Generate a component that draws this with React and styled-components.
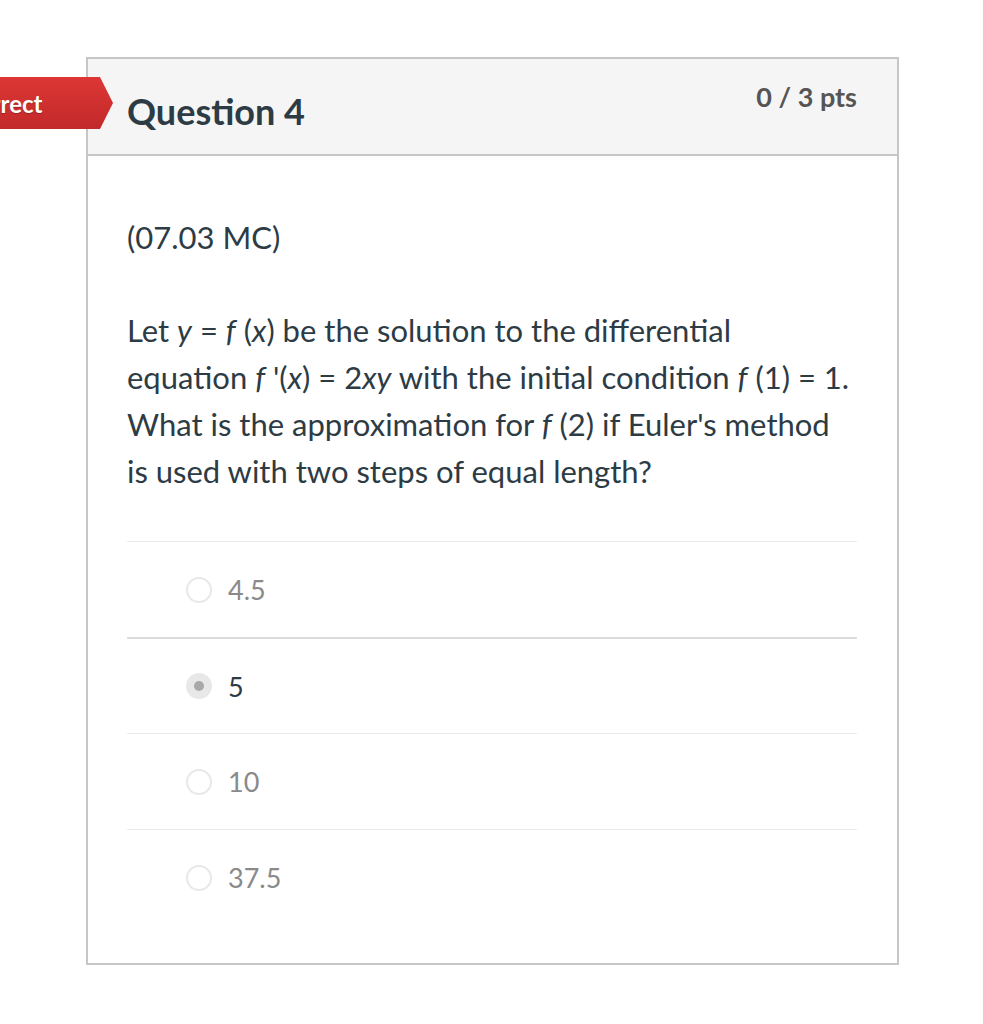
import React from "react";
import styled, { createGlobalStyle } from "styled-components";

const GlobalStyle = createGlobalStyle`
  html, body {
    margin: 0;
    padding: 0;
    background: #ffffff;
    font-family: Lato, "Open Sans", sans-serif;
    overflow: hidden;
  }
`;

const Page = styled.div`
  position: relative;
  width: 983px;
  height: 1024px;
  padding-top: 57px;
  box-sizing: border-box;
`;

const Card = styled.div`
  margin-left: 86px;
  width: 813px;
  border: 2px solid #c6c6c6;
  box-sizing: border-box;
`;

const Header = styled.div`
  display: flex;
  justify-content: space-between;
  align-items: flex-start;
  min-height: 97px;
  padding: 22px 40px 0 39px;
  box-sizing: border-box;
  background: #f5f5f5;
  border-bottom: 2px solid #c6c6c6;
`;

const Title = styled.h2`
  margin: 9px 0 0;
  font-size: 36px;
  line-height: 43px;
  font-weight: 700;
  color: #2d3b45;
`;

const Points = styled.div`
  font-size: 27px;
  line-height: 32px;
  font-weight: 700;
  color: #555555;
`;

const Banner = styled.div`
  position: absolute;
  left: -66px;
  top: 77px;
  width: 179px;
  height: 52px;
  display: flex;
  align-items: center;
  padding-left: 12px;
  box-sizing: border-box;
  background: linear-gradient(#dc3735, #c2292a);
  clip-path: polygon(0 0, calc(100% - 13px) 0, 100% 50%, calc(100% - 13px) 100%, 0 100%);
  color: #ffffff;
  font-size: 24px;
  font-weight: 700;
  text-shadow: 0 1px 1px rgba(0, 0, 0, 0.25);
`;

const Body = styled.div`
  padding: 58px 40px 38px 39px;
`;

const Para = styled.p`
  margin: 0 0 46px;
  font-size: 31px;
  line-height: 47px;
  color: #2d3b45;
`;

const Answers = styled.div`
  display: flex;
  flex-direction: column;
`;

const Row = styled.div`
  display: flex;
  align-items: center;
  height: 96px;
  padding-left: 59px;
  box-sizing: border-box;
  border-top: ${(p) => (p.$strong ? "2px solid #dcdcdc" : "1px solid #ebebeb")};
`;

const Radio = styled.span`
  width: 26px;
  height: 26px;
  border-radius: 50%;
  box-sizing: border-box;
  border: 2px solid #e8e8e8;
  background: ${(p) => (p.$checked ? "#e8e8e8" : "#ffffff")};
  display: flex;
  align-items: center;
  justify-content: center;
  margin-right: 16px;

  &::after {
    content: "";
    display: ${(p) => (p.$checked ? "block" : "none")};
    width: 10px;
    height: 10px;
    border-radius: 50%;
    background: #a9a9a9;
  }
`;

const Label = styled.span`
  font-size: 27px;
  color: ${(p) => (p.$checked ? "#2d3b45" : "#8a8a8a")};
`;

const answers = [
  { text: "4.5" },
  { text: "5", checked: true, strong: true },
  { text: "10" },
  { text: "37.5" },
];

export default function App() {
  return (
    <>
      <GlobalStyle />
      <Page>
        <Card>
          <Header>
            <Title>Question 4</Title>
            <Points>0 / 3 pts</Points>
          </Header>
          <Body>
            <Para>(07.03 MC)</Para>
            <Para>
              Let <i>y</i> = <i>f</i> (<i>x</i>) be the solution to the differential equation{" "}
              <i>f</i> '(<i>x</i>) = 2<i>xy</i> with the initial condition <i>f</i> (1) = 1. What
              is the approximation for <i>f</i> (2) if Euler's method is used with two steps of
              equal length?
            </Para>
            <Answers>
              {answers.map((a) => (
                <Row key={a.text} $strong={a.strong}>
                  <Radio $checked={a.checked} />
                  <Label $checked={a.checked}>{a.text}</Label>
                </Row>
              ))}
            </Answers>
          </Body>
        </Card>
        <Banner>Incorrect</Banner>
      </Page>
    </>
  );
}
